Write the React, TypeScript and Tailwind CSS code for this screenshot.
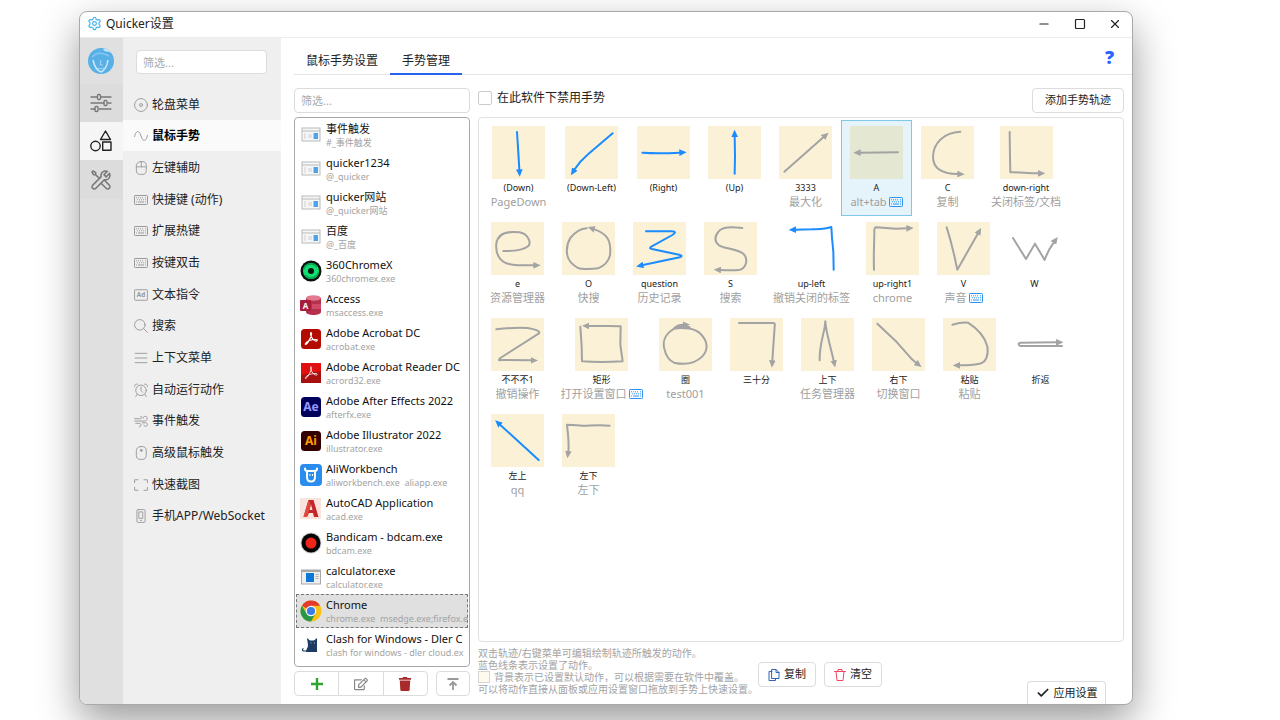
import React from "react";
import { Check, Minus, Settings, Square, X } from "lucide-react";
import { FaTrash, FaRegEdit } from "react-icons/fa";
import { LiaToolsSolid } from "react-icons/lia";

type IconProps = { className?: string };

const Svg = ({
  className,
  box = "0 0 24 24",
  width = 1.6,
  children,
}: IconProps & {
  box?: string;
  width?: number;
  children: React.ReactNode;
}) => (
  <svg
    className={className}
    viewBox={box}
    fill="none"
    stroke="currentColor"
    strokeWidth={width}
    strokeLinecap="round"
    strokeLinejoin="round"
  >
    {children}
  </svg>
);

const KeyboardIcon = ({ className }: IconProps) => (
  <Svg className={className} box="0 0 14 10" width={1}>
    <rect x="0.5" y="0.5" width="13" height="9" rx="0.8" />
    <path
      strokeLinecap="butt"
      d="M2 2.8h1M4 2.8h1M6 2.8h1M8 2.8h1M11 2.8h1M3 4.8h1M5 4.8h1M7 4.8h1M9 4.8h1M11 4.8h1M2 7h1M4 7h6M11 7h1"
    />
  </Svg>
);

const DiscIcon = ({ className }: IconProps) => (
  <Svg className={className}>
    <circle cx="12" cy="12" r="11" />
    <circle cx="12" cy="12" r="2.5" />
  </Svg>
);

const WaveIcon = ({ className }: IconProps) => (
  <Svg className={className}>
    <path d="M1 13C3 3 8 0 12 12S21 21 23 11" />
  </Svg>
);

const LeftMouseIcon = ({ className }: IconProps) => (
  <Svg className={className}>
    <rect x="4" y="1" width="17" height="22" rx="7" />
    <path d="M4 10h17M12.500 1v9" />
  </Svg>
);

const WheelMouseIcon = ({ className }: IconProps) => (
  <Svg className={className}>
    <rect x="4" y="1" width="17" height="22" rx="7" />
    <circle cx="12.500" cy="7.500" r="1.600" fill="currentColor" />
  </Svg>
);

const AdIcon = ({ className }: IconProps) => (
  <svg className={className} viewBox="0 0 24 24" fill="none">
    <rect x="1" y="3" width="22" height="18" rx="1" stroke="currentColor" strokeWidth="1.6" />
    <text
      x="12"
      y="16"
      textAnchor="middle"
      fontSize="11"
      fontWeight="700"
      fill="currentColor"
    >
      Ad
    </text>
  </svg>
);

const SearchIcon = ({ className }: IconProps) => (
  <Svg className={className}>
    <circle cx="10" cy="10" r="9" />
    <path d="M16.500 16.500L23 23" />
  </Svg>
);

const MenuLinesIcon = ({ className }: IconProps) => (
  <Svg className={className}>
    <path d="M2 4h20M2 12h20M2 20h20" />
  </Svg>
);

const ClockIcon = ({ className }: IconProps) => (
  <Svg className={className}>
    <circle cx="12" cy="12.500" r="9" />
    <path d="M12 7v6l3 3M1 6c0-3 2-5 5-4M23 6c0-3-2-5-5-4M5.500 19.500L3 23M18.500 19.500L21 23" />
  </Svg>
);

const WindIcon = ({ className }: IconProps) => (
  <Svg className={className}>
    <path d="M1 8h9c5 0 4-5 1-4M1 12h17c6 0 6-8 1-8-2 0-3 1-3 3M3 16h6c4 0 4 6 0 6M14 15h6c4 0 4 6 0 6-2 0-3-1-3-2" />
  </Svg>
);

const ScanIcon = ({ className }: IconProps) => (
  <Svg className={className}>
    <path d="M1 8V3h6M17 3h6v5M23 16v5h-6M7 21H1v-5" />
  </Svg>
);

const PhoneIcon = ({ className }: IconProps) => (
  <Svg className={className}>
    <rect x="5" y="1" width="14" height="22" rx="2" />
    <path d="M9 5h6v11H9zM11 19.500h2" />
  </Svg>
);

const SlidersIcon = ({ className }: IconProps) => (
  <Svg className={className} box="0 0 22 20" width={1.3}>
    <path d="M1 4h6M11 4h10M1 10h13M18 10h3M1 16h4M9 16h12" />
    <rect x="7.500" y="1.500" width="3" height="5" rx="1" />
    <rect x="14" y="7.500" width="3" height="5" rx="1" />
    <rect x="5" y="13.500" width="3" height="5" rx="1" />
  </Svg>
);

const ShapesIcon = ({ className }: IconProps) => (
  <Svg className={className} box="0 0 22 22" width={1.4}>
    <path d="M15.500 1L20.500 9.500H10.500Z" />
    <circle cx="5.500" cy="16" r="4.700" />
    <rect x="12.700" y="12" width="8.300" height="8.300" />
  </Svg>
);

const navItems: { label: string; icon: React.ElementType }[] = [
  { label: "轮盘菜单", icon: DiscIcon },
  { label: "鼠标手势", icon: WaveIcon },
  { label: "左键辅助", icon: LeftMouseIcon },
  { label: "快捷键 (动作)", icon: KeyboardIcon },
  { label: "扩展热键", icon: KeyboardIcon },
  { label: "按键双击", icon: KeyboardIcon },
  { label: "文本指令", icon: AdIcon },
  { label: "搜索", icon: SearchIcon },
  { label: "上下文菜单", icon: MenuLinesIcon },
  { label: "自动运行动作", icon: ClockIcon },
  { label: "事件触发", icon: WindIcon },
  { label: "高级鼠标触发", icon: WheelMouseIcon },
  { label: "快速截图", icon: ScanIcon },
  { label: "手机APP/WebSocket", icon: PhoneIcon },
];

const PanelApp = () => (
  <>
    <rect x="2" y="4" width="18" height="13" fill="#f7f7f7" stroke="#b9b9b9" />
    <path d="M2 7h18" stroke="#b9b9b9" />
    <path d="M4 9h2v6H4zM8 10h4v4H8z" fill="#e3e3e3" />
    <path d="M13.500 9h4.500v6h-4.500z" fill="#4fa3e8" />
  </>
);

const ChromexApp = () => (
  <>
    <circle cx="11" cy="11" r="10.500" fill="#0b120d" />
    <circle cx="11" cy="11" r="8" fill="#10e070" />
    <path d="M4 9C5 4 13 2 17 7M18 13C17 18 9 20 5 15" stroke="#07a552" strokeWidth="1.500" fill="none" />
    <circle cx="11" cy="11" r="3" fill="#0b120d" />
  </>
);

const AccessApp = () => (
  <>
    <path d="M6 4v14c0 4 15 4 15 0V4z" fill="#b5304c" />
    <path d="M12 10h9v5h-9z" fill="#d04a66" />
    <ellipse cx="13.500" cy="4" rx="7.500" ry="2.800" fill="#e2798d" />
    <rect x="0" y="6" width="11" height="11" rx="1" fill="#a61c39" />
    <text x="5.500" y="14.500" textAnchor="middle" fontSize="8" fontWeight="700" fill="#fff">
      A
    </text>
  </>
);

const acrobatCurve =
  "M5.500 15.500c1.500-2.500 5.500-4 10.500-4 2 0 1.500 2-.5 1.500C12 12 10.500 7 10.500 5.500s1.500-1 1 1C11 9 8.500 14 7 15.500s-2 1-1.500 0z";

const AcrobatApp = () => (
  <>
    <rect x="1" y="1" width="20" height="20" rx="3.500" fill="#b30b00" />
    <path d={acrobatCurve} fill="none" stroke="#fff" strokeWidth="1.200" />
  </>
);

const ReaderApp = () => (
  <>
    <path d="M1 1h20v20H1z" fill="#a80f0f" />
    <path d="M1 1h20v8L1 13z" fill="#e01010" />
    <path d={acrobatCurve} fill="none" stroke="#fff" strokeWidth="0.800" />
  </>
);

const AfterEffectsApp = () => (
  <>
    <rect x="1" y="1" width="20" height="20" rx="3.500" fill="#00005b" />
    <text x="11" y="15" textAnchor="middle" fontSize="12" fontWeight="700" fill="#9999ff">
      Ae
    </text>
  </>
);

const IllustratorApp = () => (
  <>
    <rect x="1" y="1" width="20" height="20" rx="3.500" fill="#330000" />
    <text x="11" y="15" textAnchor="middle" fontSize="12" fontWeight="700" fill="#ff9a00">
      Ai
    </text>
  </>
);

const AliApp = () => (
  <>
    <rect x="0" y="0" width="22" height="22" rx="4" fill="#2a8cec" />
    <path
      d="M5 4.500c0 1.800 1 2.500 2.500 2.500h7C16 7 17 6.300 17 4.500M7 7.500V13c0 2.800 1.500 4.500 4 4.500s4-1.700 4-4.500V7.500"
      fill="none"
      stroke="#fff"
      strokeWidth="2"
      strokeLinecap="round"
    />
    <path d="M10 10v2M12.500 10v2" stroke="#fff" strokeWidth="1" />
  </>
);

const AutocadApp = () => (
  <>
    <path d="M0 0h21v21H0z" fill="#f8e4dd" />
    <path d="M8.500 2h5l5 17h-4.500l-1-4H9l-2 4H3.500zM11 6.500L9.500 12h3z" fill="#c3272b" />
    <path d="M8.500 2L3.500 19H7L11 6.500z" fill="#e04a3d" />
  </>
);

const BandicamApp = () => (
  <>
    <circle cx="11" cy="11" r="10.500" fill="#c9c9c9" />
    <circle cx="11" cy="11" r="9.500" fill="#050505" />
    <circle cx="11" cy="11" r="5.500" fill="#f02418" />
  </>
);

const CalculatorApp = () => (
  <>
    <rect x="1.500" y="4" width="19" height="14" fill="#eee" stroke="#a8a8a8" />
    <path d="M2 4h18v2H2z" fill="#a8a8a8" />
    <path d="M6 7h8v9H6z" fill="#0b78d8" />
    <path d="M15.500 8.500h3M15.500 10.500h3M15.500 12.500h3" stroke="#b5b5b5" />
  </>
);

const ChromeApp = () => (
  <>
    <circle cx="11" cy="11" r="10.500" fill="#fbc116" />
    <path d="M11 11L1.900 5.750A10.500 10.500 0 0 1 20.100 5.750H11z" fill="#e33b2e" />
    <path d="M1.900 5.750A10.500 10.500 0 0 0 11 21.500L15.550 13.600 11 11 6.450 13.600z" fill="#279847" />
    <circle cx="11" cy="11" r="5.200" fill="#fff" />
    <circle cx="11" cy="11" r="4.100" fill="#3a7de9" />
  </>
);

const ClashApp = () => (
  <>
    <path d="M7 4l3 2.500h4L17 4v14H6c0-3 2-4 2-7z" fill="#1d3a63" />
    <path d="M7 17H4c-2 0-2-2-.5-2.500" fill="none" stroke="#1d3a63" strokeWidth="1.200" />
    <path d="M10.500 9h1M14 9h1" stroke="#9db7d8" />
  </>
);

const apps: { name: string; exe: string; art: React.ElementType }[] = [
  { name: "事件触发", exe: "#_事件触发", art: PanelApp },
  { name: "quicker1234", exe: "@_quicker", art: PanelApp },
  { name: "quicker网站", exe: "@_quicker网站", art: PanelApp },
  { name: "百度", exe: "@_百度", art: PanelApp },
  { name: "360ChromeX", exe: "360chromex.exe", art: ChromexApp },
  { name: "Access", exe: "msaccess.exe", art: AccessApp },
  { name: "Adobe Acrobat DC", exe: "acrobat.exe", art: AcrobatApp },
  { name: "Adobe Acrobat Reader DC", exe: "acrord32.exe", art: ReaderApp },
  { name: "Adobe After Effects 2022", exe: "afterfx.exe", art: AfterEffectsApp },
  { name: "Adobe Illustrator 2022", exe: "illustrator.exe", art: IllustratorApp },
  { name: "AliWorkbench", exe: "aliworkbench.exe  aliapp.exe", art: AliApp },
  { name: "AutoCAD Application", exe: "acad.exe", art: AutocadApp },
  { name: "Bandicam - bdcam.exe", exe: "bdcam.exe", art: BandicamApp },
  { name: "calculator.exe", exe: "calculator.exe", art: CalculatorApp },
  { name: "Chrome", exe: "chrome.exe  msedge.exe;firefox.e", art: ChromeApp },
  { name: "Clash for Windows - Dler C", exe: "clash for windows - dler cloud.ex", art: ClashApp },
];

type Gesture = {
  name: string;
  action?: string;
  path: string;
  width?: string;
  blue?: boolean;
  plain?: boolean;
  keyboard?: boolean;
  selected?: boolean;
};

// paths are drawn on a 159 x 159 board, the arrow head sits on the last point
const gestures: Gesture[] = [
  { name: "(Down)", action: "PageDown", blue: true, width: "w-[73px]", path: "M75 18L79 80L82 131" },
  { name: "(Down-Left)", blue: true, width: "w-[73px]", path: "M143 22L70 84Q45 105 29 130" },
  { name: "(Right)", blue: true, path: "M16 80Q60 83 128 80" },
  { name: "(Up)", blue: true, path: "M80 143L81 90L80 32" },
  { name: "3333", action: "最大化", path: "M16 137L133 34" },
  { name: "A", action: "alt+tab", keyboard: true, selected: true, path: "M144 79L31 80" },
  { name: "C", action: "复制", path: "M118 17C70 19 37 50 36 92C36 120 55 143 110 144" },
  {
    name: "down-right",
    action: "关闭标签/文档",
    width: "w-[86px]",
    path: "M29 18L30 95L31 139C60 138 80 142 115 142",
  },
  {
    name: "e",
    action: "资源管理器",
    path: "M37 87C75 88 97 85 112 72C122 60 110 35 85 31C50 27 20 33 16 65C12 105 35 125 65 128C85 131 105 130 128 130",
  },
  {
    name: "O",
    action: "快搜",
    path: "M74 19C55 20 40 30 25 48C15 65 13 85 16 100C20 120 38 132 48 138C60 142 90 142 108 139C125 133 140 118 144 100C146 80 144 60 136 48C125 32 112 27 97 22",
  },
  {
    name: "question",
    action: "历史记录",
    blue: true,
    path: "M39 28H115C130 28 128 33 118 39L55 74C49 78 50 79 57 81L138 98C148 100 148 103 140 106L30 129",
  },
  {
    name: "S",
    action: "搜索",
    path: "M115 18C80 14 55 14 44 28C30 45 33 60 45 70C60 80 100 80 118 95C135 112 125 138 108 143C90 146 70 145 50 144",
  },
  {
    name: "up-left",
    action: "撤销关闭的标签",
    width: "w-[91px]",
    blue: true,
    plain: true,
    path: "M146 143L145 90L141 48L139 15C120 22 100 21 80 22L32 23",
  },
  {
    name: "up-right1",
    action: "chrome",
    path: "M24 143C22 100 25 60 25 30Q24 16 30 16L90 20L122 19",
  },
  { name: "V", action: "声音", keyboard: true, path: "M29 16C40 50 50 90 57 125L61 143L122 36" },
  { name: "W", plain: true, path: "M15 48L54 111L81 65L110 114C118 90 124 80 137 62" },
  {
    name: "不不不1",
    action: "撤销操作",
    path: "M16 34C50 30 90 29 110 30C135 34 148 40 144 46L28 120C20 128 25 127 35 126L120 127",
  },
  {
    name: "矩形",
    action: "打开设置窗口",
    keyboard: true,
    width: "w-[97px]",
    path: "M16 26L20 85L21 130C50 132 90 133 143 130L136 80L137 25C110 22 70 25 42 24",
  },
  {
    name: "圈",
    action: "test001",
    path: "M92 28C75 24 55 26 42 34C20 48 10 70 16 92C20 112 32 128 45 134C80 142 110 135 130 115C150 95 145 68 125 48C110 32 75 26 44 32Q55 20 72 20",
  },
  { name: "三十分", path: "M27 15H128C135 15 135 18 134 25L127 128" },
  {
    name: "上下",
    action: "任务管理器",
    path: "M56 127C55 70 72 45 73 10C74 40 85 70 98 128",
  },
  { name: "右下", action: "切换窗口", path: "M16 17L75 73L112 115Q118 123 132 134" },
  {
    name: "粘贴",
    action: "粘贴",
    path: "M28 20Q55 12 75 14C100 30 125 55 133 85C137 110 130 133 110 137C90 141 70 142 50 142",
  },
  { name: "折返", plain: true, path: "M144 84H20C12 82 12 75 20 74L127 73" },
  { name: "左上", action: "qq", blue: true, path: "M143 138L80 80L28 33" },
  { name: "左下", action: "左下", path: "M143 35C100 30 70 38 45 34L15 32C18 60 22 90 19 112" },
];

const ArrowMarkers = () => (
  <svg className="absolute size-0">
    <defs>
      <marker id="head-gray" viewBox="0 0 22 20" markerUnits="userSpaceOnUse" markerWidth="22" markerHeight="20" refX="1" refY="10" orient="auto">
        <path d="M0 0L22 10L0 20Z" fill="#a3a3a3" />
      </marker>
      <marker id="head-blue" viewBox="0 0 22 20" markerUnits="userSpaceOnUse" markerWidth="22" markerHeight="20" refX="1" refY="10" orient="auto">
        <path d="M0 0L22 10L0 20Z" fill="#1a8cff" />
      </marker>
    </defs>
  </svg>
);

const GestureTile = ({ gesture: g }: { gesture: Gesture }) => (
  <button
    className={`flex h-24 flex-col items-center border pt-[5px] ${
      g.selected ? "border-[#7fc8ea] bg-[#e5f3fb]" : "border-transparent"
    } ${g.width ?? "w-[71px]"}`}
  >
    <svg
      className={`size-[53px] shrink-0 ${
        g.plain ? "" : g.selected ? "bg-[#e4e8d3]" : "bg-[#fbf1d6]"
      }`}
      viewBox="0 0 159 159"
    >
      <path
        d={g.path}
        fill="none"
        stroke={g.blue ? "#1a8cff" : "#a3a3a3"}
        strokeWidth="6"
        strokeLinecap="round"
        strokeLinejoin="round"
        markerEnd={g.blue ? "url(#head-blue)" : "url(#head-gray)"}
      />
    </svg>
    <span className="mt-px text-[9px] leading-4 whitespace-nowrap text-[#222]">{g.name}</span>
    {g.action && (
      <span className="flex items-center gap-0.5 text-[11px] leading-3 whitespace-nowrap text-[#a0a0a0]">
        {g.action}
        {g.keyboard && <KeyboardIcon className="h-[10px] w-[14px] text-[#2c94f5]" />}
      </span>
    )}
  </button>
);

const TitleBar = () => (
  <header className="flex h-[26px] shrink-0 items-center border-b border-[#ededed] pb-0.5 pl-[7px]">
    <Settings className="mr-1 size-[15px] text-[#3fb0ee]" strokeWidth={1.8} />
    <h1 className="flex-1 text-[12px]">Quicker设置</h1>
    <button aria-label="最小化" className="flex w-9 justify-center">
      <Minus className="size-[14px]" />
    </button>
    <button aria-label="最大化" className="flex w-9 justify-center">
      <Square className="size-3" strokeWidth={2.4} />
    </button>
    <button aria-label="关闭" className="flex w-[34px] justify-center">
      <X className="size-[14px]" />
    </button>
  </header>
);

const Rail = () => (
  <nav className="flex w-[43px] shrink-0 flex-col bg-[#e0e0e0] text-[#777]">
    <div className="flex h-[46px] items-center justify-center pr-px">
      <svg className="size-[26px]" viewBox="0 0 26 26">
        <circle cx="13" cy="13" r="13" fill="#58b0e6" />
        <path d="M15 1c2 4 6 1 9 5C22 3 19 1 15 1z" fill="#d8eefa" />
        <path d="M5 12c2 9 5 11 8 12 4-2 6-5 7-12" stroke="#cdeafa" strokeWidth="1.500" fill="none" />
        <path d="M4 9c4-4 10-5 17-1" stroke="#85c8f0" strokeWidth="1.500" fill="none" />
        <path d="M13 12l-1 5h3M10 20c2 1 4 1 6 0" stroke="#a8d8f5" fill="none" />
      </svg>
    </div>
    <button
      aria-label="基本设置"
      className="flex h-[38px] items-center justify-center bg-[#dcdcdc] pr-px"
    >
      <SlidersIcon className="h-5 w-[22px]" />
    </button>
    <button
      aria-label="触发方式"
      className="flex h-[38px] items-center justify-center bg-[#f5f5f5] pr-px text-[#222]"
    >
      <ShapesIcon className="size-[22px]" />
    </button>
    <button
      aria-label="工具"
      className="flex h-[39px] items-center justify-center bg-[#dcdcdc] pr-px"
    >
      <LiaToolsSolid className="size-6" />
    </button>
  </nav>
);

const Sidebar = () => (
  <aside className="w-[158px] shrink-0 bg-[#efefef]">
    <div className="flex h-[50px] items-center pr-[14px] pb-0.5 pl-[13px]">
      <input
        aria-label="筛选菜单"
        placeholder="筛选..."
        className="h-6 w-full rounded border border-[#dcdcdc] bg-white px-1.5 text-[11px] placeholder:text-[#aaa]"
      />
    </div>
    <ul className="grid h-[443px] auto-rows-fr">
      {navItems.map(({ label, icon: Icon }, i) => (
        <li key={label} className={i === 1 ? "bg-[#fafafa] font-bold text-black" : ""}>
          <a href="#" className="flex h-full items-center gap-1 pt-0.5 pl-[11px] text-[12px]">
            <Icon className="size-[14px] shrink-0 text-[#999]" />
            {label}
          </a>
        </li>
      ))}
    </ul>
  </aside>
);

const AppList = () => (
  <div className="flex w-[176px] shrink-0 flex-col">
    <input
      aria-label="筛选软件"
      placeholder="筛选..."
      className="h-[25px] shrink-0 rounded border border-[#dcdcdc] px-1.5 text-[11px] placeholder:text-[#aaa]"
    />
    <ul className="mt-1 min-h-0 flex-1 rounded border border-[#a8a8a8] px-px">
      {apps.map(({ name, exe, art: Art }) => (
        <li
          key={name}
          className={`flex h-[34px] items-center gap-1 border pl-[3px] ${
            name === "Chrome"
              ? "border-dashed border-[#777] bg-[#e0e0e0]"
              : "border-transparent"
          }`}
        >
          <svg className="size-[22px] shrink-0" viewBox="0 0 22 22">
            <Art />
          </svg>
          <div className="min-w-0 flex-1 whitespace-pre">
            <p className="text-[11px] leading-4 text-[#111]">{name}</p>
            <p className="text-[9px] leading-3 text-[#a3a3a3]">{exe}</p>
          </div>
        </li>
      ))}
    </ul>
    <div className="mt-1 mb-2 flex h-[25px] shrink-0 justify-between">
      <div className="flex w-[134px] divide-x divide-[#dcdcdc] rounded border border-[#dcdcdc]">
        <button aria-label="添加" className="flex flex-1 items-center justify-center">
          <svg className="size-3" viewBox="0 0 12 12">
            <path d="M6 0v12M0 6h12" stroke="#2ea52e" strokeWidth="2.400" />
          </svg>
        </button>
        <button aria-label="编辑" className="flex flex-1 items-center justify-center">
          <FaRegEdit className="size-[14px] text-[#888]" />
        </button>
        <button aria-label="删除" className="flex flex-1 items-center justify-center">
          <FaTrash className="size-[14px] text-[#a82a2a]" />
        </button>
      </div>
      <button
        aria-label="置顶"
        className="flex w-[34px] items-center justify-center rounded border border-[#dcdcdc]"
      >
        <svg className="size-3" viewBox="0 0 12 12">
          <path d="M0.500 1h11M6 12V4M2.500 7.500L6 4l3.500 3.500" fill="none" stroke="#999" strokeWidth="1.800" />
        </svg>
      </button>
    </div>
  </div>
);

const outlineButton =
  "flex items-center justify-center gap-1 border border-[#dcdcdc] bg-white text-[11px] whitespace-nowrap";

const GesturePanel = () => (
  <div className="flex min-w-0 flex-1 flex-col">
    <div className="flex h-[25px] shrink-0 items-center justify-between">
      <label className="flex items-center gap-[5px] pb-1.5 text-[12px]">
        <input
          type="checkbox"
          className="size-[14px] appearance-none rounded-xs border border-[#ccc] bg-white"
        />
        在此软件下禁用手势
      </label>
      <button className={`${outlineButton} h-[25px] w-[92px] rounded`}>添加手势轨迹</button>
    </div>
    <div className="mt-1 min-h-0 flex-1 rounded border border-[#e0e0e0] pt-0.5 pr-1 pl-[3px]">
      <ArrowMarkers />
      <div className="flex flex-wrap">
        {gestures.map((g) => (
          <GestureTile key={g.name} gesture={g} />
        ))}
      </div>
    </div>
    <footer className="flex h-[62px] shrink-0 items-start">
      <div className="w-[280px] pt-[5px] text-[10px] leading-[12px] whitespace-nowrap text-[#a3a3a3]">
        <p>双击轨迹/右键菜单可编辑绘制轨迹所触发的动作。</p>
        <p>蓝色线条表示设置了动作。</p>
        <p className="flex items-center gap-1">
          <span className="size-3 border border-[#d5d5d5] bg-[#fffaee]" />
          背景表示已设置默认动作，可以根据需要在软件中覆盖。
        </p>
        <p>可以将动作直接从面板或应用设置窗口拖放到手势上快速设置。</p>
      </div>
      <button className={`${outlineButton} mt-5 h-[25px] w-[58px] rounded`}>
        <Svg className="size-3 text-[#2f63b5]" width={2}>
          <path d="M8 1h8l6 6v12H8zM16 1v6h6M8 5H2v18h13v-4" />
        </Svg>
        复制
      </button>
      <button className={`${outlineButton} mt-5 ml-2 h-[25px] w-[58px] rounded`}>
        <Svg className="size-3 text-[#f04864]" width={2}>
          <path d="M1 5h22M8 5V1h8v4M4 5l2 18h12l2-18" />
        </Svg>
        清空
      </button>
      <button
        className={`${outlineButton} mr-[18px] ml-auto h-[23px] w-[79px] self-end rounded-t border-b-0`}
      >
        <Check className="size-[14px]" strokeWidth={3} />
        应用设置
      </button>
    </footer>
  </div>
);

const App = () => (
  <main className="flex h-screen overflow-hidden bg-white pt-[11px] pr-[147px] pb-[15px] pl-[79px] font-['Noto_Sans','Noto_Sans_CJK_SC',sans-serif] text-[#222]">
    <div className="flex min-w-0 flex-1 flex-col overflow-hidden rounded-lg border border-[#a9a9a9] bg-white shadow-[0_16px_40px_rgba(0,0,0,0.4)]">
      <TitleBar />
      <div className="flex min-h-0 flex-1">
        <Rail />
        <Sidebar />
        <section className="flex min-w-0 flex-1 flex-col pl-[13px]">
          <div className="flex h-[37px] shrink-0 items-stretch border-b border-[#e4e4e4] text-[12px]">
            <button className="px-3 pt-[10px]">鼠标手势设置</button>
            <button className="-mb-px border-b-2 border-[#2a62f0] px-3 pt-[10px]">手势管理</button>
            <button
              aria-label="帮助"
              className="mr-[18px] ml-auto pt-0.5 text-[18px] font-black text-[#2a62ff]"
            >
              ?
            </button>
          </div>
          <div className="flex min-h-0 flex-1 gap-2 pt-[13px] pr-2">
            <AppList />
            <GesturePanel />
          </div>
        </section>
      </div>
    </div>
  </main>
);

export default App;
